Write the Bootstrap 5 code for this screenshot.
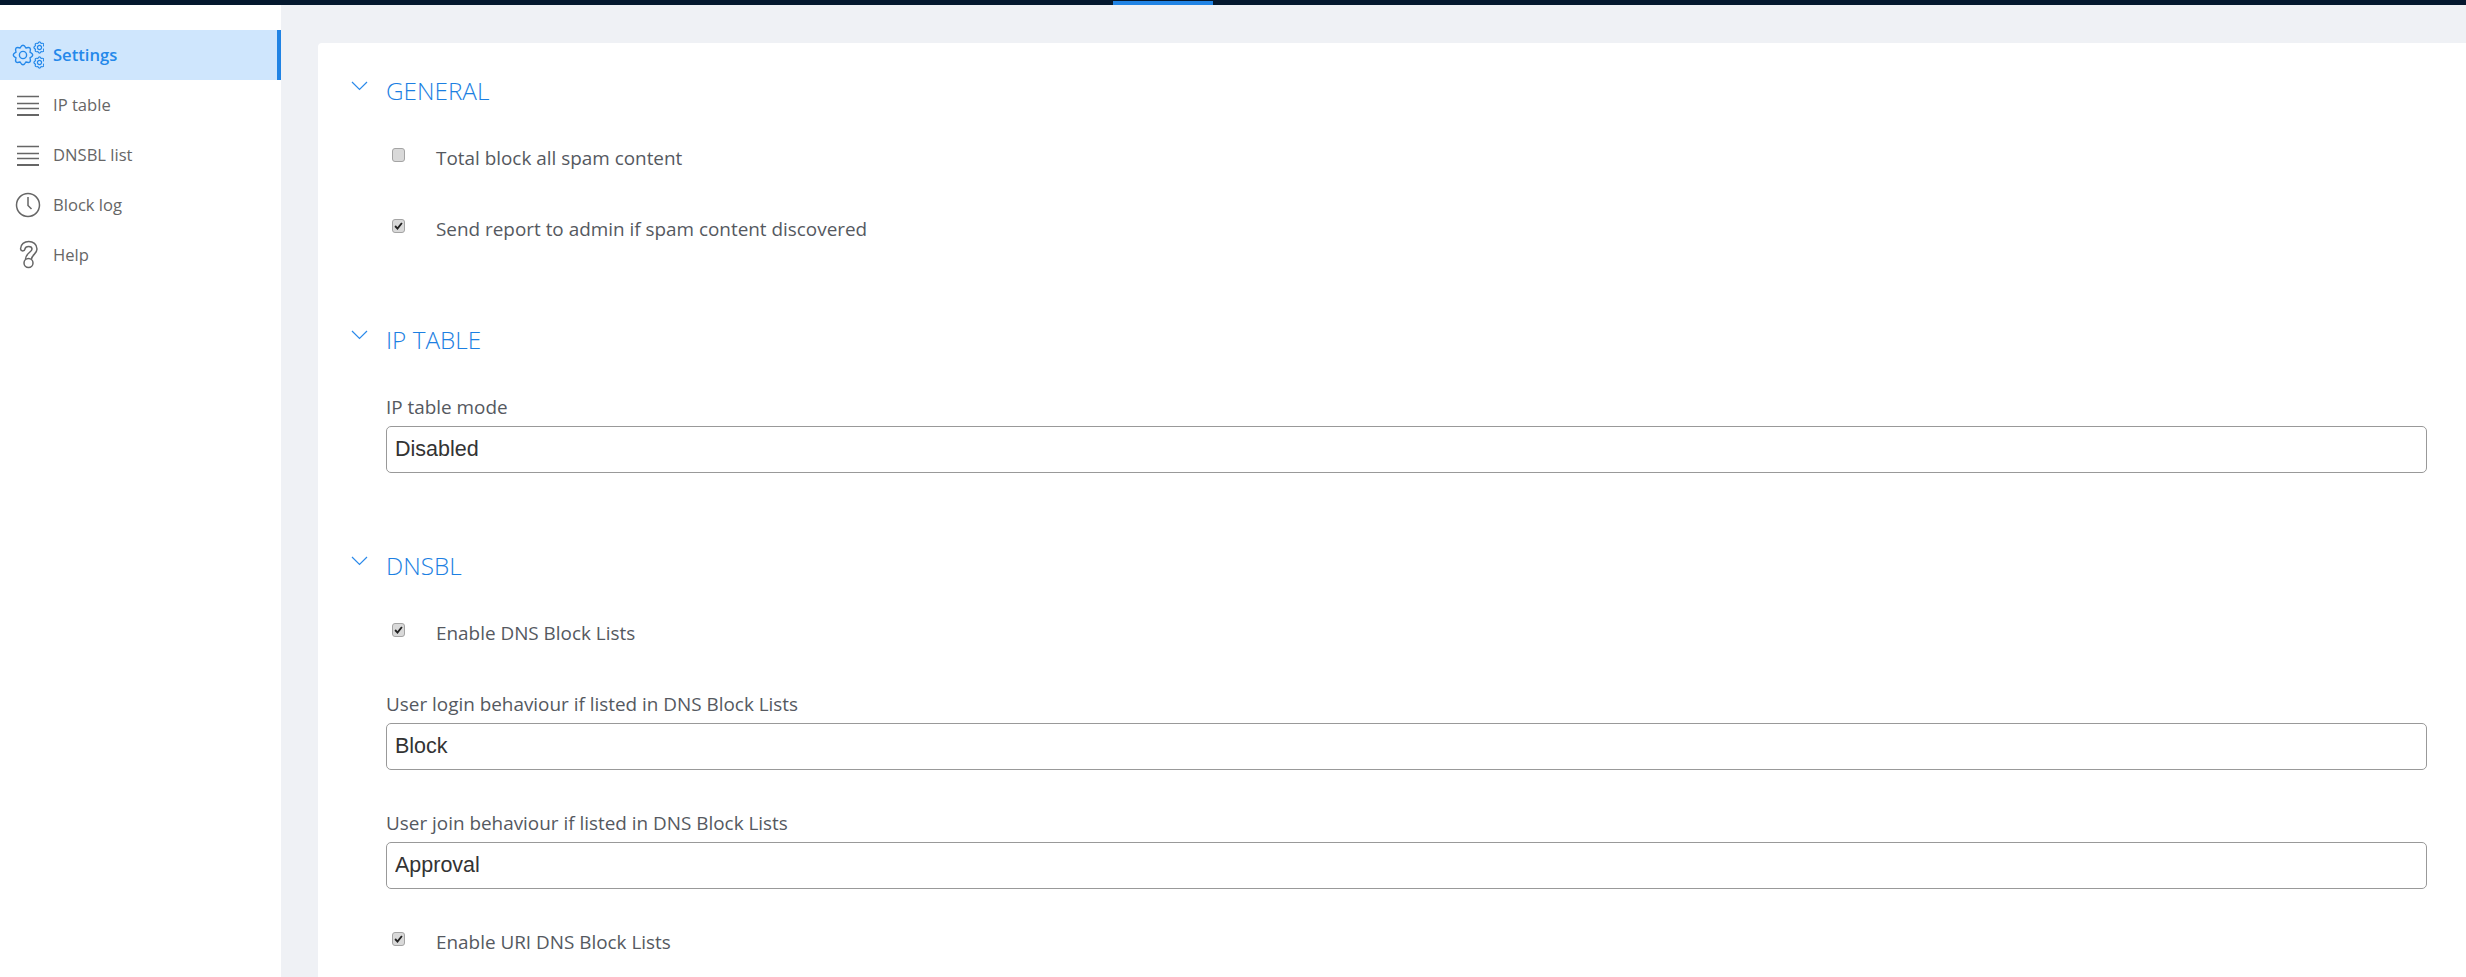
<!DOCTYPE html>
<html lang="en">
<head>
<meta charset="utf-8">
<title>Settings</title>
<link href="https://cdn.jsdelivr.net/npm/bootstrap@5.3.0/dist/css/bootstrap.min.css" rel="stylesheet">
<style>
html,body{height:100%;overflow:hidden}
body{font-family:"Open Sans","Noto Sans","Liberation Sans",sans-serif;background:#eff1f5;color:#55595f}
.topline{height:5px;background:#04182e}
.topline-spacer{width:1113px}
.topline-mark{width:100px;height:4px;margin-top:1px;background:#2083e4}
.page-shell{height:972px}
.side-menu{width:281px;padding-top:25px;flex:none}
.side-link{height:50px;padding-left:12px;padding-top:1px;gap:9px;font-size:16.6px;color:#666;text-decoration:none}
.side-link svg{width:32px;height:40px;flex:none;fill:none;stroke:#666;stroke-width:1.5}
.side-link.is-current{background:#cfe6fd;color:#2488ea;font-weight:600;border-right:4px solid #2083e4;padding-left:7px}
.side-link.is-current svg{stroke:#2488ea;width:37px;stroke-width:1.4}
.side-link.is-current svg .gear-small{stroke-width:1.2}
.main-area{padding:38px 0 0 37px;min-width:0}
.sheet{background:#fff;border-radius:4px 0 0 0;padding:33px 39px 0 33px;height:100%}
.sec-chevron{width:17px;height:10px;flex:none;margin-top:-11px;fill:none;stroke:#2b8aea;stroke-width:1.2}
.sec-head{gap:18px;height:30px}
.sec-title{font-size:24.3px;font-weight:300;color:#1c7fe2;line-height:30px;margin:0}
.sec-body{padding-left:35px}
.tick{width:13px;height:14px;margin:0 31px 0 0;position:relative;top:-3px;flex:none;border:1px solid #a4a4a4;background-color:#d9d9d9;box-shadow:none}
.form-check-input.tick[type=checkbox]{border-radius:3px}
.tick:checked{background-color:#d9d9d9;border-color:#a4a4a4;background-image:url("data:image/svg+xml,%3csvg xmlns='http://www.w3.org/2000/svg' viewBox='0 0 13 14'%3e%3cpath fill='none' stroke='%23222' stroke-width='2.200' d='M2.500 7l2.800 3L10.500 3.500'/%3e%3c/svg%3e");background-size:100%}
.tick-row{padding-left:6px;font-size:18.9px;line-height:24px;align-items:center;margin:0}
.field-label{font-size:18.9px;line-height:24px;margin:0 0 7px;display:block}
.field-select{height:47px;border:1px solid #999;border-radius:5px;background-image:none;padding:0 8px 2px;font:21.5px "Liberation Sans",Arial,sans-serif;color:#333;box-shadow:none}
</style>
</head>
<body>
<svg width="0" height="0" class="position-absolute">
  <symbol id="gear" viewBox="-14 -14 28 28" overflow="visible"><path vector-effect="non-scaling-stroke" d="M7.020 -2.910Q12.500 0 7.020 2.910Q8.840 8.840 2.910 7.020Q0 12.500 -2.910 7.020Q-8.840 8.840 -7.020 2.910Q-12.500 0 -7.020 -2.910Q-8.840 -8.840 -2.910 -7.020Q0 -12.500 2.910 -7.020Q8.840 -8.840 7.020 -2.910Z"/><circle vector-effect="non-scaling-stroke" r="3.600"/></symbol>
</svg>
<div class="topline d-flex"><div class="topline-spacer"></div><div class="topline-mark"></div></div>
<div class="page-shell d-flex">
  <nav class="side-menu bg-white d-flex flex-column">
    <a class="side-link is-current d-flex align-items-center" href="#"><svg viewBox="0 0 37 40"><use href="#gear" x="2" y="5" width="28" height="28"/><use class="gear-small" href="#gear" x="24.500" y="3.500" width="16" height="16"/><use class="gear-small" href="#gear" x="24.500" y="18.500" width="16" height="16"/></svg>Settings</a>
    <a class="side-link d-flex align-items-center" href="#"><svg viewBox="0 0 32 40"><path d="M5 10.500h22M5 17.500h22M5 22.500h22"/><path stroke-width="2" d="M5 29h22"/></svg>IP table</a>
    <a class="side-link d-flex align-items-center" href="#"><svg viewBox="0 0 32 40"><path d="M5 10.500h22M5 17.500h22M5 22.500h22"/><path stroke-width="2" d="M5 29h22"/></svg>DNSBL list</a>
    <a class="side-link d-flex align-items-center" href="#"><svg viewBox="0 0 32 40"><circle cx="16" cy="19" r="11.500"/><path d="M16 11v8.500l3.500 3.500"/></svg>Block log</a>
    <a class="side-link d-flex align-items-center" href="#"><svg viewBox="0 0 32 40"><path d="M8.500 13C8.500 3 25 3 25 13C25 18 20 18.500 19.500 23M8.500 13C9 15.500 12.500 15.500 13 13C13.500 9.500 20 9.500 20 13C20 16 14 17 13.500 23"/><circle cx="16.500" cy="27" r="4.500"/></svg>Help</a>
  </nav>
  <main class="main-area flex-grow-1">
    <div class="sheet">
      <section>
        <div class="sec-head d-flex align-items-center"><svg class="sec-chevron" viewBox="0 0 17 10"><path d="M1 1l7.500 7.500L16 1"/></svg><h2 class="sec-title">GENERAL</h2></div>
        <div class="sec-body" style="padding-top:40px">
          <label class="tick-row d-flex"><input class="form-check-input tick" type="checkbox">Total block all spam content</label>
          <label class="tick-row d-flex" style="margin-top:47px"><input class="form-check-input tick" type="checkbox" checked>Send report to admin if spam content discovered</label>
        </div>
      </section>
      <section style="margin-top:84px">
        <div class="sec-head d-flex align-items-center"><svg class="sec-chevron" viewBox="0 0 17 10"><path d="M1 1l7.500 7.500L16 1"/></svg><h2 class="sec-title">IP TABLE</h2></div>
        <div class="sec-body" style="padding-top:40px">
          <label class="field-label" for="f1">IP table mode</label>
          <select id="f1" class="form-select field-select"><option>Disabled</option></select>
        </div>
      </section>
      <section style="margin-top:78px">
        <div class="sec-head d-flex align-items-center"><svg class="sec-chevron" viewBox="0 0 17 10"><path d="M1 1l7.500 7.500L16 1"/></svg><h2 class="sec-title">DNSBL</h2></div>
        <div class="sec-body" style="padding-top:40px">
          <label class="tick-row d-flex"><input class="form-check-input tick" type="checkbox" checked>Enable DNS Block Lists</label>
          <label class="field-label" for="f2" style="margin-top:47px">User login behaviour if listed in DNS Block Lists</label>
          <select id="f2" class="form-select field-select"><option>Block</option></select>
          <label class="field-label" for="f3" style="margin-top:41px">User join behaviour if listed in DNS Block Lists</label>
          <select id="f3" class="form-select field-select"><option>Approval</option></select>
          <label class="tick-row d-flex" style="margin-top:41px"><input class="form-check-input tick" type="checkbox" checked>Enable URI DNS Block Lists</label>
        </div>
      </section>
    </div>
  </main>
</div>
<script src="https://cdn.jsdelivr.net/npm/bootstrap@5.3.0/dist/js/bootstrap.bundle.min.js"></script>
</body>
</html>
